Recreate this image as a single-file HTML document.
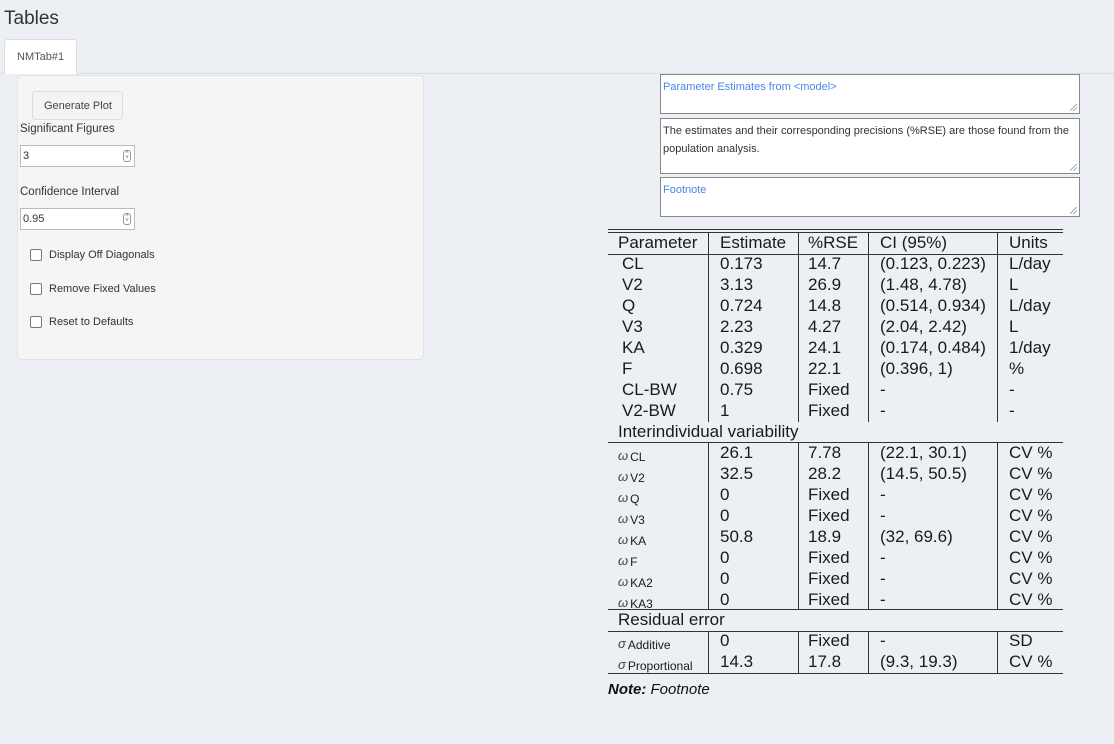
<!DOCTYPE html>
<html><head><meta charset="utf-8"><style>
*{box-sizing:border-box;margin:0;padding:0}
body{width:1114px;height:744px;background:#ecf0f5;font-family:"Liberation Sans",sans-serif;position:relative;overflow:hidden;color:#333}
.abs{position:absolute}
.ui{font-size:11.5px;color:#333}
.ta{position:absolute;left:660px;width:420px;background:#fff;border:1px solid #888;font-size:11px;padding:3px 2px;line-height:18px}
.ta:after{content:"";position:absolute;right:2px;bottom:2px;width:7px;height:7px;background:linear-gradient(135deg,transparent 45%,#888 46%,#888 52%,transparent 53%,transparent 70%,#888 71%,#888 77%,transparent 78%)}
.inp{position:absolute;left:20px;width:115px;height:22px;background:#fff;border:1px solid #bbb;font-size:11px;padding:4px 2px}
.spin{position:absolute;right:3px;top:4px;width:8px;height:12px;border:1px solid #999;border-radius:3px;font-size:6px;line-height:5px;text-align:center;color:#666}
.cb{position:absolute;left:30px;width:12px;height:12px;border:1px solid #777;border-radius:2px;background:#fff}
.cbl{position:absolute;left:49px;font-size:11px}
.row{position:absolute;left:608px;width:455px;height:21px;font-size:17px;line-height:21px;color:#1a1a1a}
.row > span{position:absolute;top:0;white-space:nowrap}
.c1{left:14px}.c0{left:10px}.c2{left:112px}.c3{left:200px}.c4{left:272px}.c5{left:401px}
.row > span.g{font-size:13px;font-style:italic;top:3px;color:#444}
.row span.sub{font-size:12px;font-style:normal;position:relative;top:1px;left:2px;color:#1a1a1a}
.h{position:absolute;left:608px;width:455px;height:1px;background:#333}
.v{position:absolute;width:1px;background:#333}
</style></head><body>
<div class="abs" style="left:4px;top:8px;font-size:19px;color:#333">Tables</div>
<div class="abs" style="left:0;top:73px;width:1114px;height:1px;background:#ddd"></div>
<div class="abs" style="left:4px;top:39px;width:73px;height:35px;background:#fff;border:1px solid #ddd;border-bottom:none;border-radius:3px 3px 0 0;font-size:11px;padding:11px 0 0 12px;color:#555">NMTab#1</div>
<div class="abs" style="left:17px;top:75px;width:407px;height:285px;background:#f5f5f5;border:1px solid #e3e3e3;border-radius:4px"></div>
<div class="abs" style="left:32px;top:91px;width:91px;height:29px;background:#f4f4f4;border:1px solid #ddd;border-radius:3px;font-size:11px;padding:8px 0 0 11px;color:#444">Generate Plot</div>
<div class="abs ui" style="left:20px;top:123px">Significant Figures</div>
<div class="inp" style="top:145px">3<div class="spin">˄<br>˅</div></div>
<div class="abs ui" style="left:20px;top:186px">Confidence Interval</div>
<div class="inp" style="top:208px">0.95<div class="spin">˄<br>˅</div></div>
<div class="cb" style="top:249px"></div><div class="cbl" style="top:249px">Display Off Diagonals</div>
<div class="cb" style="top:283px"></div><div class="cbl" style="top:283px">Remove Fixed Values</div>
<div class="cb" style="top:316px"></div><div class="cbl" style="top:316px">Reset to Defaults</div>

<div class="ta" style="top:74px;height:40px;color:#4a86e8">Parameter Estimates from &lt;model&gt;</div>
<div class="ta" style="top:118px;height:56px;color:#333">The estimates and their corresponding precisions (%RSE) are those found from the population analysis.</div>
<div class="ta" style="top:177px;height:40px;color:#4a86e8">Footnote</div>

<div class="h" style="top:229px"></div><div class="h" style="top:232px"></div>
<div class="h" style="top:254px"></div><div class="h" style="top:442px"></div>
<div class="h" style="top:609px"></div><div class="h" style="top:631px"></div>
<div class="h" style="top:673px"></div>
<div class="v" style="left:708px;top:233px;height:189px"></div>
<div class="v" style="left:798px;top:233px;height:189px"></div>
<div class="v" style="left:868px;top:233px;height:189px"></div>
<div class="v" style="left:997px;top:233px;height:189px"></div>
<div class="v" style="left:708px;top:442px;height:167px"></div>
<div class="v" style="left:798px;top:442px;height:167px"></div>
<div class="v" style="left:868px;top:442px;height:167px"></div>
<div class="v" style="left:997px;top:442px;height:167px"></div>
<div class="v" style="left:708px;top:631px;height:42px"></div>
<div class="v" style="left:798px;top:631px;height:42px"></div>
<div class="v" style="left:868px;top:631px;height:42px"></div>
<div class="v" style="left:997px;top:631px;height:42px"></div>

<div class="row" style="top:232px"><span class="c0">Parameter</span><span class="c2">Estimate</span><span class="c3">%RSE</span><span class="c4">CI (95%)</span><span class="c5">Units</span></div>
<div class="row" style="top:253px"><span class="c1">CL</span><span class="c2">0.173</span><span class="c3">14.7</span><span class="c4">(0.123, 0.223)</span><span class="c5">L/day</span></div>
<div class="row" style="top:274px"><span class="c1">V2</span><span class="c2">3.13</span><span class="c3">26.9</span><span class="c4">(1.48, 4.78)</span><span class="c5">L</span></div>
<div class="row" style="top:295px"><span class="c1">Q</span><span class="c2">0.724</span><span class="c3">14.8</span><span class="c4">(0.514, 0.934)</span><span class="c5">L/day</span></div>
<div class="row" style="top:316px"><span class="c1">V3</span><span class="c2">2.23</span><span class="c3">4.27</span><span class="c4">(2.04, 2.42)</span><span class="c5">L</span></div>
<div class="row" style="top:337px"><span class="c1">KA</span><span class="c2">0.329</span><span class="c3">24.1</span><span class="c4">(0.174, 0.484)</span><span class="c5">1/day</span></div>
<div class="row" style="top:358px"><span class="c1">F</span><span class="c2">0.698</span><span class="c3">22.1</span><span class="c4">(0.396, 1)</span><span class="c5">%</span></div>
<div class="row" style="top:379px"><span class="c1">CL-BW</span><span class="c2">0.75</span><span class="c3">Fixed</span><span class="c4">-</span><span class="c5">-</span></div>
<div class="row" style="top:400px"><span class="c1">V2-BW</span><span class="c2">1</span><span class="c3">Fixed</span><span class="c4">-</span><span class="c5">-</span></div>
<div class="row" style="top:421px"><span class="c0">Interindividual variability</span></div>
<div class="row" style="top:442px"><span class="c0 g">ω<span class="sub">CL</span></span><span class="c2">26.1</span><span class="c3">7.78</span><span class="c4">(22.1, 30.1)</span><span class="c5">CV %</span></div>
<div class="row" style="top:463px"><span class="c0 g">ω<span class="sub">V2</span></span><span class="c2">32.5</span><span class="c3">28.2</span><span class="c4">(14.5, 50.5)</span><span class="c5">CV %</span></div>
<div class="row" style="top:484px"><span class="c0 g">ω<span class="sub">Q</span></span><span class="c2">0</span><span class="c3">Fixed</span><span class="c4">-</span><span class="c5">CV %</span></div>
<div class="row" style="top:505px"><span class="c0 g">ω<span class="sub">V3</span></span><span class="c2">0</span><span class="c3">Fixed</span><span class="c4">-</span><span class="c5">CV %</span></div>
<div class="row" style="top:526px"><span class="c0 g">ω<span class="sub">KA</span></span><span class="c2">50.8</span><span class="c3">18.9</span><span class="c4">(32, 69.6)</span><span class="c5">CV %</span></div>
<div class="row" style="top:547px"><span class="c0 g">ω<span class="sub">F</span></span><span class="c2">0</span><span class="c3">Fixed</span><span class="c4">-</span><span class="c5">CV %</span></div>
<div class="row" style="top:568px"><span class="c0 g">ω<span class="sub">KA2</span></span><span class="c2">0</span><span class="c3">Fixed</span><span class="c4">-</span><span class="c5">CV %</span></div>
<div class="row" style="top:589px"><span class="c0 g">ω<span class="sub">KA3</span></span><span class="c2">0</span><span class="c3">Fixed</span><span class="c4">-</span><span class="c5">CV %</span></div>
<div class="row" style="top:609px"><span class="c0">Residual error</span></div>
<div class="row" style="top:630px"><span class="c0 g">σ<span class="sub">Additive</span></span><span class="c2">0</span><span class="c3">Fixed</span><span class="c4">-</span><span class="c5">SD</span></div>
<div class="row" style="top:651px"><span class="c0 g">σ<span class="sub">Proportional</span></span><span class="c2">14.3</span><span class="c3">17.8</span><span class="c4">(9.3, 19.3)</span><span class="c5">CV %</span></div>
<div class="abs" style="left:608px;top:681px;font-size:15px;font-style:italic;color:#111"><b>Note:</b> Footnote</div>
</body></html>
